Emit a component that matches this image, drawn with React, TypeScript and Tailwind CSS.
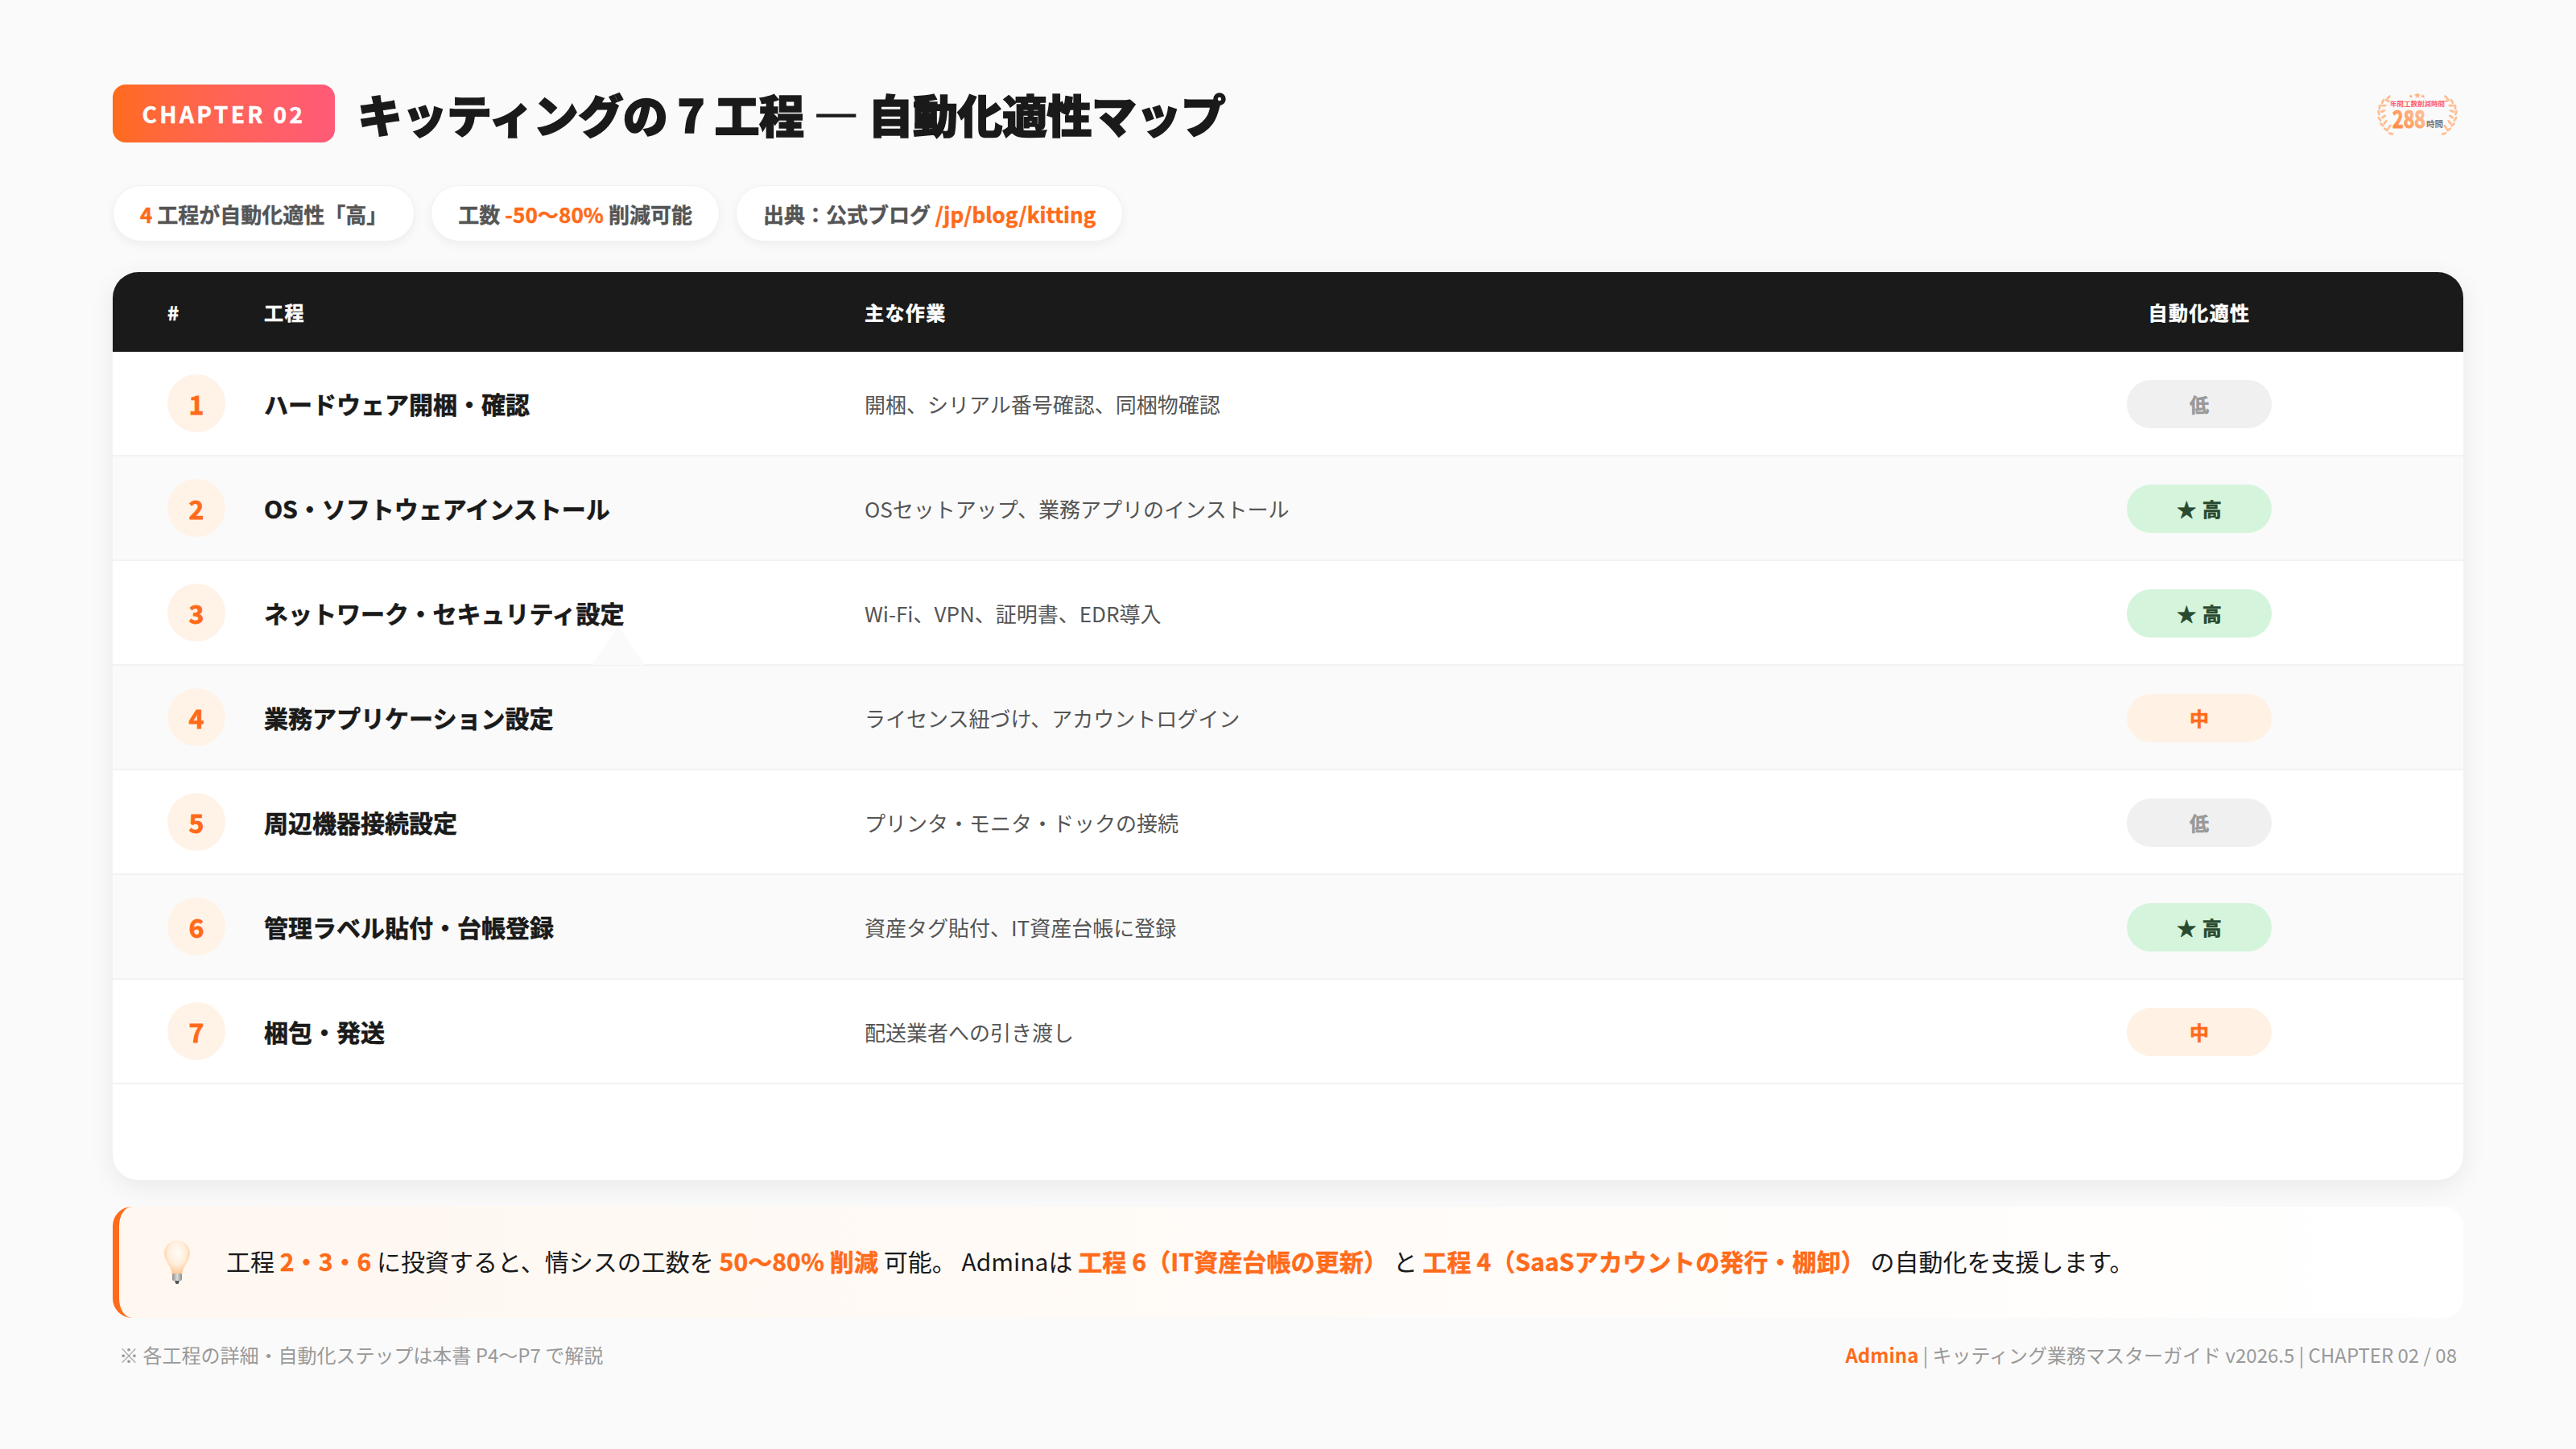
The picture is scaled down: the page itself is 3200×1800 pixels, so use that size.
const rows = [
  { n: 1, name: "ハードウェア開梱・確認", desc: "開梱、シリアル番号確認、同梱物確認", level: "low" },
  { n: 2, name: "OS・ソフトウェアインストール", desc: "OSセットアップ、業務アプリのインストール", level: "high" },
  { n: 3, name: "ネットワーク・セキュリティ設定", desc: "Wi-Fi、VPN、証明書、EDR導入", level: "high" },
  { n: 4, name: "業務アプリケーション設定", desc: "ライセンス紐づけ、アカウントログイン", level: "mid" },
  { n: 5, name: "周辺機器接続設定", desc: "プリンタ・モニタ・ドックの接続", level: "low" },
  { n: 6, name: "管理ラベル貼付・台帳登録", desc: "資産タグ貼付、IT資産台帳に登録", level: "high" },
  { n: 7, name: "梱包・発送", desc: "配送業者への引き渡し", level: "mid" },
];

function Level({ level }: { level: string }) {
  const base = "w-[180px] h-[60px] mt-[2px] rounded-full flex items-center justify-center text-[24px] font-bold [-webkit-text-stroke:0.6px_currentColor] [word-spacing:2px]";
  if (level === "high") return <div className={`${base} bg-[#d4f4dc] text-[#2a4a30]`}>★ 高</div>;
  if (level === "mid") return <div className={`${base} bg-[#fff1e4] text-[#ff6b1a]`}>中</div>;
  return <div className={`${base} bg-[#f0f0f0] text-[#999999]`}>低</div>;
}

const leafPts: [number, number, number][] = [
  [20, 55, 15],
  [14, 50, 35],
  [18, 47, -55],
  [9, 44, 45],
  [13, 41, -50],
  [6, 37, 55],
  [11, 34, -35],
  [5, 29, 75],
  [10, 27, -20],
  [6, 22, 95],
  [11, 20, 0],
  [10, 15, 115],
  [16, 14, 20],
  [17, 10, 135],
];

function Laurel() {
  return (
    <svg width="110" height="60" viewBox="0 0 110 60">
      <defs>
        <linearGradient id="g288" x1="0" x2="1" y1="1" y2="0">
          <stop offset="0" stopColor="#ff7f2f" />
          <stop offset="0.6" stopColor="#ffb283" />
          <stop offset="1" stopColor="#ffc8a0" />
        </linearGradient>
      </defs>
      {leafPts.map(([x, y, r], i) => (
        <ellipse key={"l" + i} cx={x} cy={y} rx="3.6" ry="1.5" fill="#ffbe92" transform={`rotate(${r} ${x} ${y})`} />
      ))}
      {leafPts.map(([x, y, r], i) => (
        <ellipse key={"r" + i} cx={106 - x} cy={y} rx="3.6" ry="1.5" fill="#ffbe92" transform={`rotate(${-r} ${106 - x} ${y})`} />
      ))}
      <g fill="#ffb27f" fontFamily="'Noto Sans CJK JP',sans-serif" textAnchor="middle">
        <text x="45" y="10" fontSize="5.500">★</text>
        <text x="53" y="10" fontSize="8.500">★</text>
        <text x="60" y="10" fontSize="5.500">★</text>
      </g>
      <text x="53" y="20.500" fontSize="8.500" fontWeight="700" fill="#ff5f74" textAnchor="middle" fontFamily="'Noto Sans CJK JP',sans-serif">年間工数削減時間</text>
      <text x="22" y="48" fontSize="30" fontWeight="700" stroke="url(#g288)" strokeWidth="1.2" fill="url(#g288)" textLength="41" lengthAdjust="spacingAndGlyphs" fontFamily="'Noto Sans CJK JP',sans-serif">288</text>
      <text x="64" y="47" fontSize="10.500" fontWeight="700" fill="#777777" fontFamily="'Noto Sans CJK JP',sans-serif">時間</text>
    </svg>
  );
}

function Bulb() {
  return (
    <svg width="36" height="56" viewBox="0 0 36 56">
      <defs>
        <radialGradient id="bulb" cx="0.5" cy="0.36" r="0.62">
          <stop offset="0" stopColor="#fffdf8" />
          <stop offset="0.55" stopColor="#ffeeda" />
          <stop offset="1" stopColor="#ffc490" />
        </radialGradient>
        <linearGradient id="cap" x1="0" x2="1" y1="0" y2="0">
          <stop offset="0" stopColor="#8c8c8c" />
          <stop offset="0.5" stopColor="#dcdcdc" />
          <stop offset="1" stopColor="#8c8c8c" />
        </linearGradient>
      </defs>
      <path d="M18 1C8 1 2 9 2 17c0 10 9 15 10 27h12c1-12 10-17 10-27C34 9 28 1 18 1Z" fill="url(#bulb)" />
      <rect x="12" y="42" width="12" height="9" rx="2" fill="url(#cap)" />
      <path d="M15 51h6l-1.500 4h-3Z" fill="#555555" />
    </svg>
  );
}

export default function App() {
  const o = "text-[#ff6b1a] font-bold [-webkit-text-stroke:0.5px_currentColor] tracking-[0.1px]";
  const chip = "h-[70px] px-[33px] rounded-full bg-white shadow-[0_4px_12px_rgba(0,0,0,0.05)] border border-[#f2f2f2] flex items-center text-[26px] font-bold text-[#555555] whitespace-nowrap [-webkit-text-stroke:0.4px_currentColor]";
  return (
    <div className="w-[3200px] h-[1800px] bg-[#fafafa] px-[140px] pt-[105px] flex flex-col text-[#1a1a1a] font-['Noto_Sans_CJK_JP','Noto_Sans',sans-serif]">
      <header className="h-[72px] flex items-center">
        <div className="w-[276px] h-[72px] rounded-[16px] bg-gradient-to-r from-[#ff6b1a] to-[#ff5a78] text-white flex items-center justify-center text-[28px] font-bold tracking-[3.4px] [-webkit-text-stroke:0.5px_currentColor]">CHAPTER 02</div>
        <h1 className="ml-[28px] text-[56px] font-black tracking-[-0.5px] whitespace-nowrap [-webkit-text-stroke:1.6px_currentColor]">キッティングの 7 工程 ― 自動化適性マップ</h1>
        <div className="ml-auto"><Laurel /></div>
      </header>

      <div className="mt-[53px] flex gap-[20px] h-[70px]">
        <div className={chip}><span className={o}>4</span>&nbsp;工程が自動化適性「高」</div>
        <div className={chip}>工数&nbsp;<span className={o}>-50〜80%</span>&nbsp;削減可能</div>
        <div className={chip}>出典：公式ブログ&nbsp;<span className={o}>/jp/blog/kitting</span></div>
      </div>

      <section className="relative mt-[38px] h-[1128px] bg-white rounded-[32px] overflow-hidden shadow-[0_8px_32px_rgba(0,0,0,0.07)]">
        <div className="h-[99px] bg-[#1a1a1a] text-white flex items-center text-[24px] font-bold tracking-[1.4px] [-webkit-text-stroke:0.5px_currentColor]">
          <div className="w-[188px] pl-[68px]">#</div>
          <div className="w-[746px]">工程</div>
          <div className="w-[1568px]">主な作業</div>
          <div className="w-[180px] text-center">自動化適性</div>
        </div>
        {rows.map((r) => (
          <div key={r.n} className={`h-[130px] flex items-center border-b-2 border-[#f2f2f2] ${r.n % 2 === 0 ? "bg-[#fafafa]" : "bg-white"}`}>
            <div className="w-[188px] pl-[68px]">
              <div className="w-[72px] h-[72px] rounded-full bg-[#fff3e8] text-[#ff6b1a] flex items-center justify-center text-[32px] font-bold [-webkit-text-stroke:0.8px_currentColor]">{r.n}</div>
            </div>
            <div className="w-[746px] text-[30px] font-bold whitespace-nowrap [-webkit-text-stroke:0.6px_currentColor]">{r.name}</div>
            <div className="w-[1568px] text-[26px] text-[#555555] whitespace-nowrap">{r.desc}</div>
            <Level level={r.level} />
          </div>
        ))}
        <div className="absolute left-[595px] top-[440px] w-[66px] h-[48px] bg-[#fafafa] [clip-path:polygon(50%_0,100%_100%,0_100%)]" />
      </section>

      <div className="mt-[33px] h-[138px] rounded-[24px] border-l-[8px] border-[#ff6b1a] bg-gradient-to-r from-[#fff7f0] to-white flex items-center pl-[54px] text-[30px] whitespace-nowrap">
        <Bulb />
        <p className="ml-[43px] mb-[3px]">
          工程 <span className={o}>2・3・6</span> に投資すると、情シスの工数を <span className={o}>50〜80% 削減</span> 可能。 Adminaは <span className={o}>工程 6（IT資産台帳の更新）</span> と <span className={o}>工程 4（SaaSアカウントの発行・棚卸）</span> の自動化を支援します。
        </p>
      </div>

      <footer className="mt-[28px] flex justify-between px-[8px] text-[24px] text-[#999999] whitespace-nowrap">
        <div>※ 各工程の詳細・自動化ステップは本書 P4〜P7 で解説</div>
        <div><span className="text-[#ff6b1a] font-bold">Admina</span> | キッティング業務マスターガイド v2026.5 | CHAPTER 02 / 08</div>
      </footer>
    </div>
  );
}
